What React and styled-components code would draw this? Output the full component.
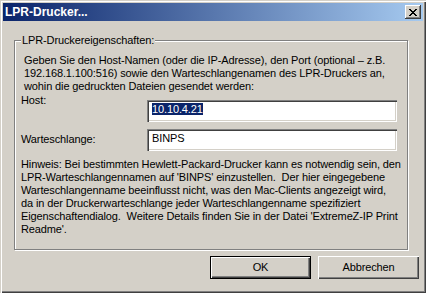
import React from "react"
import styled, { createGlobalStyle } from "styled-components"

const GlobalStyle = createGlobalStyle`
  html, body {
    margin: 0;
    padding: 0;
    background: #d4d0c8;
  }
  body {
    font-family: "Liberation Sans", Arial, sans-serif;
    font-size: 11px;
    letter-spacing: -0.12px;
    color: #000;
  }
`

const Window = styled.div`
  width: 426px;
  height: 293px;
  box-sizing: border-box;
  padding: 3px;
  background: #d4d0c8;
  display: flex;
  flex-direction: column;
  box-shadow: inset 1px 1px #d4d0c8, inset 2px 2px #fff,
    inset -1px -1px #404040, inset -2px -2px #808080;
`

const TitleBar = styled.div`
  height: 18px;
  display: flex;
  align-items: center;
  justify-content: space-between;
  padding: 0 2px 0 2px;
  background: linear-gradient(to right, #0a246a, #a6caf0);
`

const Title = styled.span`
  color: #fff;
  font-weight: bold;
  font-size: 12px;
  letter-spacing: 0;
  line-height: 13px;
  white-space: nowrap;
`

const CloseButton = styled.button`
  width: 16px;
  height: 14px;
  padding: 0;
  border: none;
  background: #d4d0c8;
  display: flex;
  align-items: center;
  justify-content: center;
  box-shadow: inset -1px -1px #404040, inset 1px 1px #fff,
    inset -2px -2px #808080;
`

const Client = styled.div`
  flex: 1;
  display: flex;
  flex-direction: column;
  padding: 13px 4px 0 11px;
`

const Group = styled.fieldset`
  margin: 0;
  width: 394px;
  box-sizing: border-box;
  padding: 7px 6px 13px 6px;
  border: 1px solid #808080;
  box-shadow: inset 1px 1px #fff, 1px 1px #fff;
  min-inline-size: 0;
`

const Legend = styled.legend`
  padding: 0 1px;
  margin: 0;
  line-height: 13px;
  background: #d4d0c8;
`

const Lines = styled.div`
  line-height: 13px;
  white-space: pre;
  margin-left: ${p => p.$indent || 0}px;
  margin-top: ${p => p.$gap || 0}px;
`

const FieldRow = styled.div`
  display: flex;
  align-items: flex-start;
  margin-top: ${p => p.$gap}px;
`

const Label = styled.label`
  width: 126px;
  line-height: 13px;
  margin-top: ${p => p.$offset}px;
`

const TextBox = styled.div`
  width: 250px;
  height: 22px;
  box-sizing: border-box;
  padding: 3px 5px 0;
  margin-top: ${p => p.$offset}px;
  background: #fff;
  line-height: 13px;
  white-space: nowrap;
  box-shadow: inset 1px 1px #808080, inset 2px 2px #404040,
    inset -1px -1px #fff, inset -2px -2px #d4d0c8;
`

const Selected = styled.span`
  background: #0a246a;
  color: #fff;
`

const ButtonRow = styled.div`
  display: flex;
  justify-content: flex-end;
  gap: 7px;
  margin-top: 6px;
`

const Button = styled.button`
  width: 101px;
  height: 23px;
  padding: 0;
  font-family: inherit;
  font-size: 11px;
  letter-spacing: inherit;
  line-height: 13px;
  color: #000;
  background: #d4d0c8;
  border: ${p => (p.$default ? "1px solid #000" : "none")};
  box-shadow: inset 1px 1px #fff, inset -1px -1px #404040,
    inset -2px -2px #808080;
`

const CloseIcon = () => (
  <svg width="8" height="7" viewBox="0 0 8 7">
    <path
      d="M0 0h2v1h1v1h2V1h1V0h2v1H7v1H6v1H5v1h1v1h1v1h1v1H6V6H5V5H3v1H2v1H0V6h1V5h1V4h1V3H2V2H1V1H0z"
      fill="#000"
    />
  </svg>
)

export default function App() {
  return (
    <>
      <GlobalStyle />
      <Window>
        <TitleBar>
          <Title>LPR-Drucker...</Title>
          <CloseButton>
            <CloseIcon />
          </CloseButton>
        </TitleBar>
        <Client>
          <Group>
            <Legend>LPR-Druckereigenschaften:</Legend>
            <Lines $indent={3}>
              {"Geben Sie den Host-Namen (oder die IP-Adresse), den Port (optional – z.B.\n192.168.1.100:516) sowie den Warteschlangenamen des LPR-Druckers an,\nwohin die gedruckten Dateien gesendet werden:"}
            </Lines>
            <FieldRow $gap={1}>
              <Label $offset={0}>Host:</Label>
              <TextBox $offset={6}>
                <Selected>10.10.4.21</Selected>
              </TextBox>
            </FieldRow>
            <FieldRow $gap={7}>
              <Label $offset={4}>Warteschlange:</Label>
              <TextBox $offset={0}>BINPS</TextBox>
            </FieldRow>
            <Lines $gap={7}>
              {"Hinweis: Bei bestimmten Hewlett-Packard-Drucker kann es notwendig sein, den\nLPR-Warteschlangennamen auf 'BINPS' einzustellen.  Der hier eingegebene\nWarteschlangenname beeinflusst nicht, was den Mac-Clients angezeigt wird,\nda in der Druckerwarteschlange jeder Warteschlangenname spezifiziert\nEigenschaftendialog.  Weitere Details finden Sie in der Datei 'ExtremeZ-IP Print\nReadme'."}
            </Lines>
          </Group>
          <ButtonRow>
            <Button $default>OK</Button>
            <Button>Abbrechen</Button>
          </ButtonRow>
        </Client>
      </Window>
    </>
  )
}
